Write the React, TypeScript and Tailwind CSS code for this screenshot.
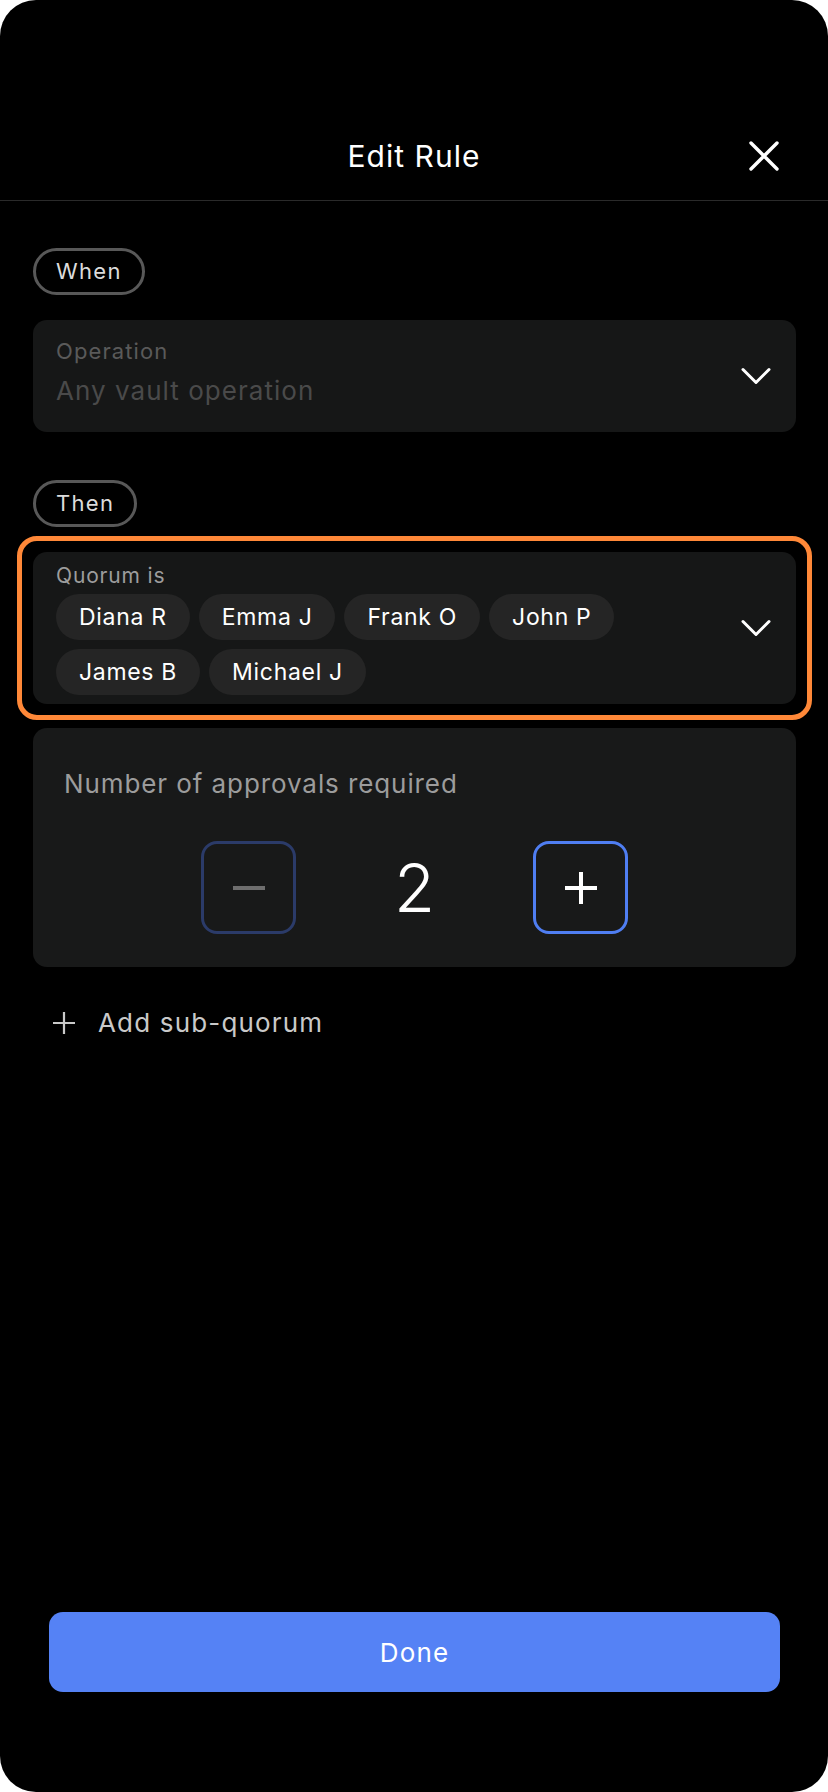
const members = ["Diana R", "Emma J", "Frank O", "John P", "James B", "Michael J"];

function Chevron() {
  return (
    <svg width="30" height="18" viewBox="0 0 30 18" fill="none" className="shrink-0">
      <path d="M2 2.5L15 15.5L28 2.5" stroke="white" strokeWidth="3" strokeLinecap="round" strokeLinejoin="round" />
    </svg>
  );
}

function CloseIcon() {
  return (
    <svg width="30" height="30" viewBox="0 0 30 30" fill="none">
      <path d="M2 2L28 28M28 2L2 28" stroke="white" strokeWidth="3.4" strokeLinecap="round" />
    </svg>
  );
}

function PlusGlyph({ size, stroke, color }: { size: number; stroke: number; color: string }) {
  return (
    <svg width={size} height={size} viewBox={`0 0 ${size} ${size}`} fill="none">
      <path d={`M0 ${size / 2}H${size}M${size / 2} 0V${size}`} stroke={color} strokeWidth={stroke} />
    </svg>
  );
}

function SectionPill({ label }: { label: string }) {
  return (
    <div className="inline-flex h-[47px] items-center self-start rounded-full border-[3px] border-[#585858] px-[20px] text-[22px] tracking-[0.06em] text-[#dcdcdc]">
      {label}
    </div>
  );
}

export default function App() {
  return (
    <div className="min-h-screen bg-white [font-family:Inter,'Noto_Sans',sans-serif]">
      <div className="flex h-[1792px] w-[828px] flex-col overflow-hidden rounded-[36px] bg-black">
        {/* header */}
        <div className="border-b border-[#2a2a2a] pt-[136px] pb-[24px]">
          <div className="grid h-[40px] grid-cols-[1fr_auto_1fr] items-center">
            <div />
            <h1 className="text-[30px] leading-[40px] tracking-[0.035em] text-white">Edit Rule</h1>
            <div className="flex justify-end pr-[49px]">
              <CloseIcon />
            </div>
          </div>
        </div>

        <div className="flex flex-col pl-[33px] pr-[32px]">
          {/* when */}
          <div className="mt-[47px] flex">
            <SectionPill label="When" />
          </div>

          <div className="mt-[25px] flex items-center rounded-[14px] bg-[#161717] pl-[23px] pr-[25px]">
            <div className="flex flex-1 flex-col pt-[18px] pb-[26px]">
              <span className="text-[22px] leading-[26px] tracking-[0.05em] text-[#5a5a5a]">Operation</span>
              <span className="mt-[12px] text-[26px] leading-[30px] tracking-[0.04em] text-[#4a4a4a]">Any vault operation</span>
            </div>
            <Chevron />
          </div>

          {/* then */}
          <div className="mt-[48px] flex">
            <SectionPill label="Then" />
          </div>

          <div className="-mx-[16px] mt-[9px] rounded-[20px] border-[5px] border-[#ff8838] px-[11px] py-[11px]">
            <div className="flex items-center rounded-[14px] bg-[#161717] pl-[23px] pr-[25px]">
              <div className="flex flex-1 flex-col pt-[11px] pb-[9px] pr-[60px]">
                <span className="text-[21px] leading-[26px] tracking-[0.04em] text-[#9d9d9d]">Quorum is</span>
                <div className="mt-[5px] flex flex-wrap gap-x-[9px] gap-y-[9px]">
                  {members.map((m) => (
                    <span
                      key={m}
                      className="flex h-[46px] items-center rounded-full bg-[#252525] px-[23px] text-[23px] tracking-[0.03em] text-white"
                    >
                      {m}
                    </span>
                  ))}
                </div>
              </div>
              <Chevron />
            </div>
          </div>

          {/* approvals */}
          <div className="mt-[8px] flex flex-col rounded-[14px] bg-[#181919] pt-[40px] pb-[33px]">
            <span className="pl-[31px] text-[26px] leading-[32px] tracking-[0.035em] text-[#9c9c9c]">Number of approvals required</span>
            <div className="mt-[41px] flex items-center justify-center">
              <button className="flex h-[93px] w-[95px] items-center justify-center rounded-[16px] border-[3px] border-[#2b3b69]">
                <svg width="32" height="4" viewBox="0 0 32 4">
                  <rect width="32" height="4" fill="#6e6e6e" />
                </svg>
              </button>
              <div className="flex w-[237px] justify-center text-[67px] leading-[80px] font-light text-white">2</div>
              <button className="flex h-[93px] w-[95px] items-center justify-center rounded-[16px] border-[3px] border-[#4f7ef2]">
                <PlusGlyph size={32} stroke={4} color="#ffffff" />
              </button>
            </div>
          </div>

          {/* add sub-quorum */}
          <div className="mt-[40px] flex items-center pl-[20px]">
            <PlusGlyph size={22} stroke={2.2} color="#c9c9c9" />
            <span className="ml-[23px] text-[26px] leading-[32px] tracking-[0.045em] text-[#c9c9c9]">Add sub-quorum</span>
          </div>
        </div>

        <div className="flex-1" />

        <div className="mb-[100px] pl-[49px] pr-[48px]">
          <button className="flex h-[80px] w-full items-center justify-center rounded-[14px] bg-[#5582f5] text-[26px] tracking-[0.045em] text-white">
            Done
          </button>
        </div>
      </div>
    </div>
  );
}
